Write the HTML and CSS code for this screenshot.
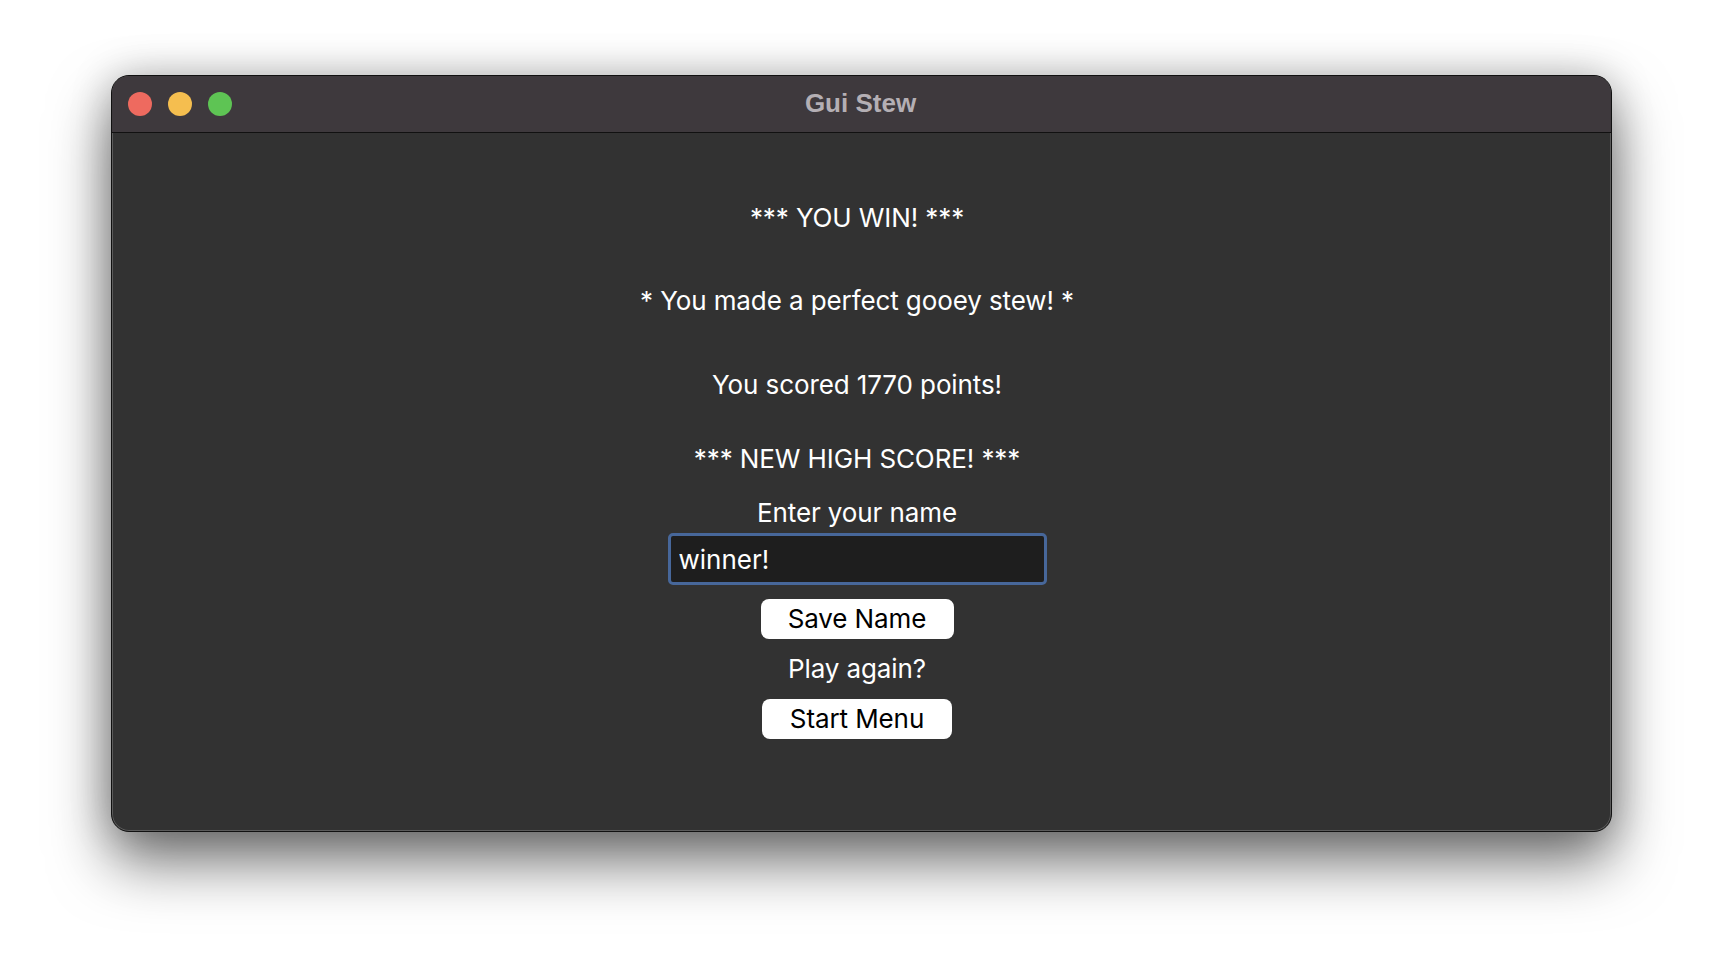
FILE: index.html
```html
<!DOCTYPE html>
<html>
<head>
<meta charset="utf-8">
<title>Gui Stew</title>
<link rel="stylesheet" href="styles.css">
</head>
<body>
<div class="window">
  <div class="titlebar">
    <div class="lights">
      <span class="light red"></span>
      <span class="light yellow"></span>
      <span class="light green"></span>
    </div>
    <div class="title">Gui Stew</div>
  </div>
  <div class="content">
    <div class="line win">*** YOU WIN! ***</div>
    <div class="line made">* You made a perfect gooey stew! *</div>
    <div class="line scored">You scored 1770 points!</div>
    <div class="line high">*** NEW HIGH SCORE! ***</div>
    <div class="line enter">Enter your name</div>
    <input class="name-input" type="text" value="winner!">
    <button class="btn save">Save Name</button>
    <div class="line again">Play again?</div>
    <button class="btn start">Start Menu</button>
  </div>
</div>
</body>
</html>
```

FILE: styles.css
```css
html, body {
  margin: 0;
  padding: 0;
}
body {
  width: 1724px;
  height: 980px;
  background: #ffffff;
  font-family: Inter, "Noto Sans", sans-serif;
  padding: 75px 0 0 111px;
  box-sizing: border-box;
  overflow: hidden;
}
.window {
  width: 1501px;
  height: 757px;
  border-radius: 18px;
  background: #323232;
  border: 1px solid #111111;
  box-sizing: border-box;
  box-shadow: inset 0 0 0 1px rgba(255,255,255,0.2), 0 30px 60px rgba(0,0,0,0.55), 0 0 40px rgba(0,0,0,0.22);
  overflow: hidden;
  display: flex;
  flex-direction: column;
}
.titlebar {
  height: 57px;
  flex: none;
  background: #3e393d;
  border-bottom: 1px solid #111;
  box-sizing: border-box;
  position: relative;
  display: flex;
  align-items: center;
  justify-content: center;
}
.lights {
  position: absolute;
  left: 16px;
  top: 16px;
  display: flex;
  gap: 16px;
}
.light {
  width: 24px;
  height: 24px;
  border-radius: 50%;
  display: block;
}
.red { background: #ee6a5f; }
.yellow { background: #f5be4f; }
.green { background: #5ec454; }
.title {
  font-family: "Liberation Sans", Arial, sans-serif;
  font-weight: bold;
  font-size: 26px;
  color: #b4afb4;
  margin-top: -2px;
  margin-right: 2px;
}
.content {
  flex: 1;
  display: flex;
  flex-direction: column;
  align-items: center;
  padding-top: 69px;
  padding-right: 9px;
  color: #ffffff;
}
.line {
  font-size: 26px;
  line-height: 32px;
  height: 32px;
  white-space: nowrap;
  letter-spacing: -0.1px;
}
.made { margin-top: 51px; }
.scored { margin-top: 52px; }
.high { margin-top: 42px; }
.enter { margin-top: 22px; }
.name-input {
  margin-top: 4px;
  width: 379px;
  height: 52px;
  box-sizing: border-box;
  border: 3px solid #47679a;
  border-radius: 5px;
  background: #1e1e1e;
  color: #ffffff;
  font-family: Inter, "Noto Sans", sans-serif;
  font-size: 26px;
  padding: 0 0 0 8px;
  outline: none;
}
.btn {
  width: 193px;
  height: 40px;
  background: #ffffff;
  color: #000000;
  border: none;
  border-radius: 8px;
  font-family: Inter, "Noto Sans", sans-serif;
  font-size: 26px;
  letter-spacing: -0.1px;
  padding: 0;
  line-height: 40px;
}
.save { margin-top: 14px; }
.again { margin-top: 14px; }
.start { margin-top: 14px; width: 190px; }
```
